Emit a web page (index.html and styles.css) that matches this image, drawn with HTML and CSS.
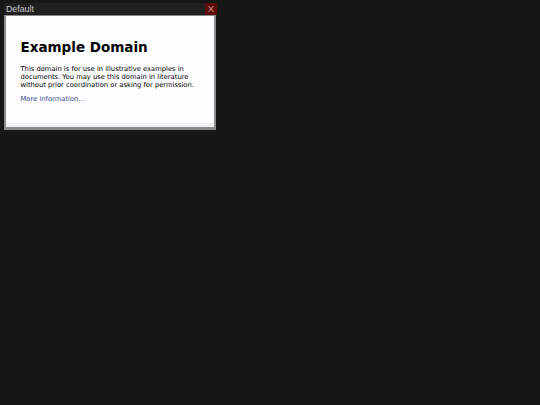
FILE: index.html
```html
<!DOCTYPE html>
<html>
<head>
<meta charset="utf-8">
<title>Default</title>
<link rel="stylesheet" href="styles.css">
</head>
<body>
<div class="window">
  <div class="titlebar">
    <span class="title">Default</span>
    <span class="close">X</span>
  </div>
  <div class="frame">
    <div class="page">
      <div class="card">
        <h1 class="heading">Example Domain</h1>
        <p class="text">This domain is for use in illustrative examples in documents. You may use this domain in literature without prior coordination or asking for permission.</p>
        <p class="text"><a class="link" href="#">More information...</a></p>
      </div>
    </div>
  </div>
</div>
</body>
</html>
```
FILE: styles.css
```css
html, body {
  margin: 0;
  padding: 0;
  background: #161616;
}
body {
  padding: 3px 0 0 4px;
}
.window {
  width: 212px;
  display: flex;
  flex-direction: column;
}
.titlebar {
  height: 12px;
  background: #202020;
  display: flex;
  justify-content: space-between;
  align-items: center;
}
.title {
  font-family: "Liberation Sans", Arial, sans-serif;
  font-size: 8.8px;
  color: #c8c8c8;
  padding-left: 2px;
  line-height: 12px;
}
.close {
  width: 12px;
  height: 12px;
  background: #5e0a0a;
  color: #d98a8a;
  font-family: "Liberation Sans", Arial, sans-serif;
  font-size: 9.5px;
  line-height: 12px;
  text-align: center;
  margin-right: -1px;
}
.frame {
  border: 2px solid #8a8a8a;
  border-top-width: 1px;
  border-bottom-width: 3px;
  background: #f0f0f2;
  height: 111px;
  overflow: hidden;
}
.page {
  font-family: "DejaVu Sans", sans-serif;
  font-size: 6.75px;
}
.card {
  background: #fdfdff;
  padding: 14px 13.5px 13px 14.5px;
  border-radius: 3.4px;
}
.heading {
  font-size: 13.5px;
  font-weight: bold;
  margin: 9px 0 9.5px;
  color: #000;
}
.text {
  margin: 6.75px 0;
  line-height: 8px;
  color: #000;
}
.link {
  color: #38488f;
  text-decoration: none;
}
```
